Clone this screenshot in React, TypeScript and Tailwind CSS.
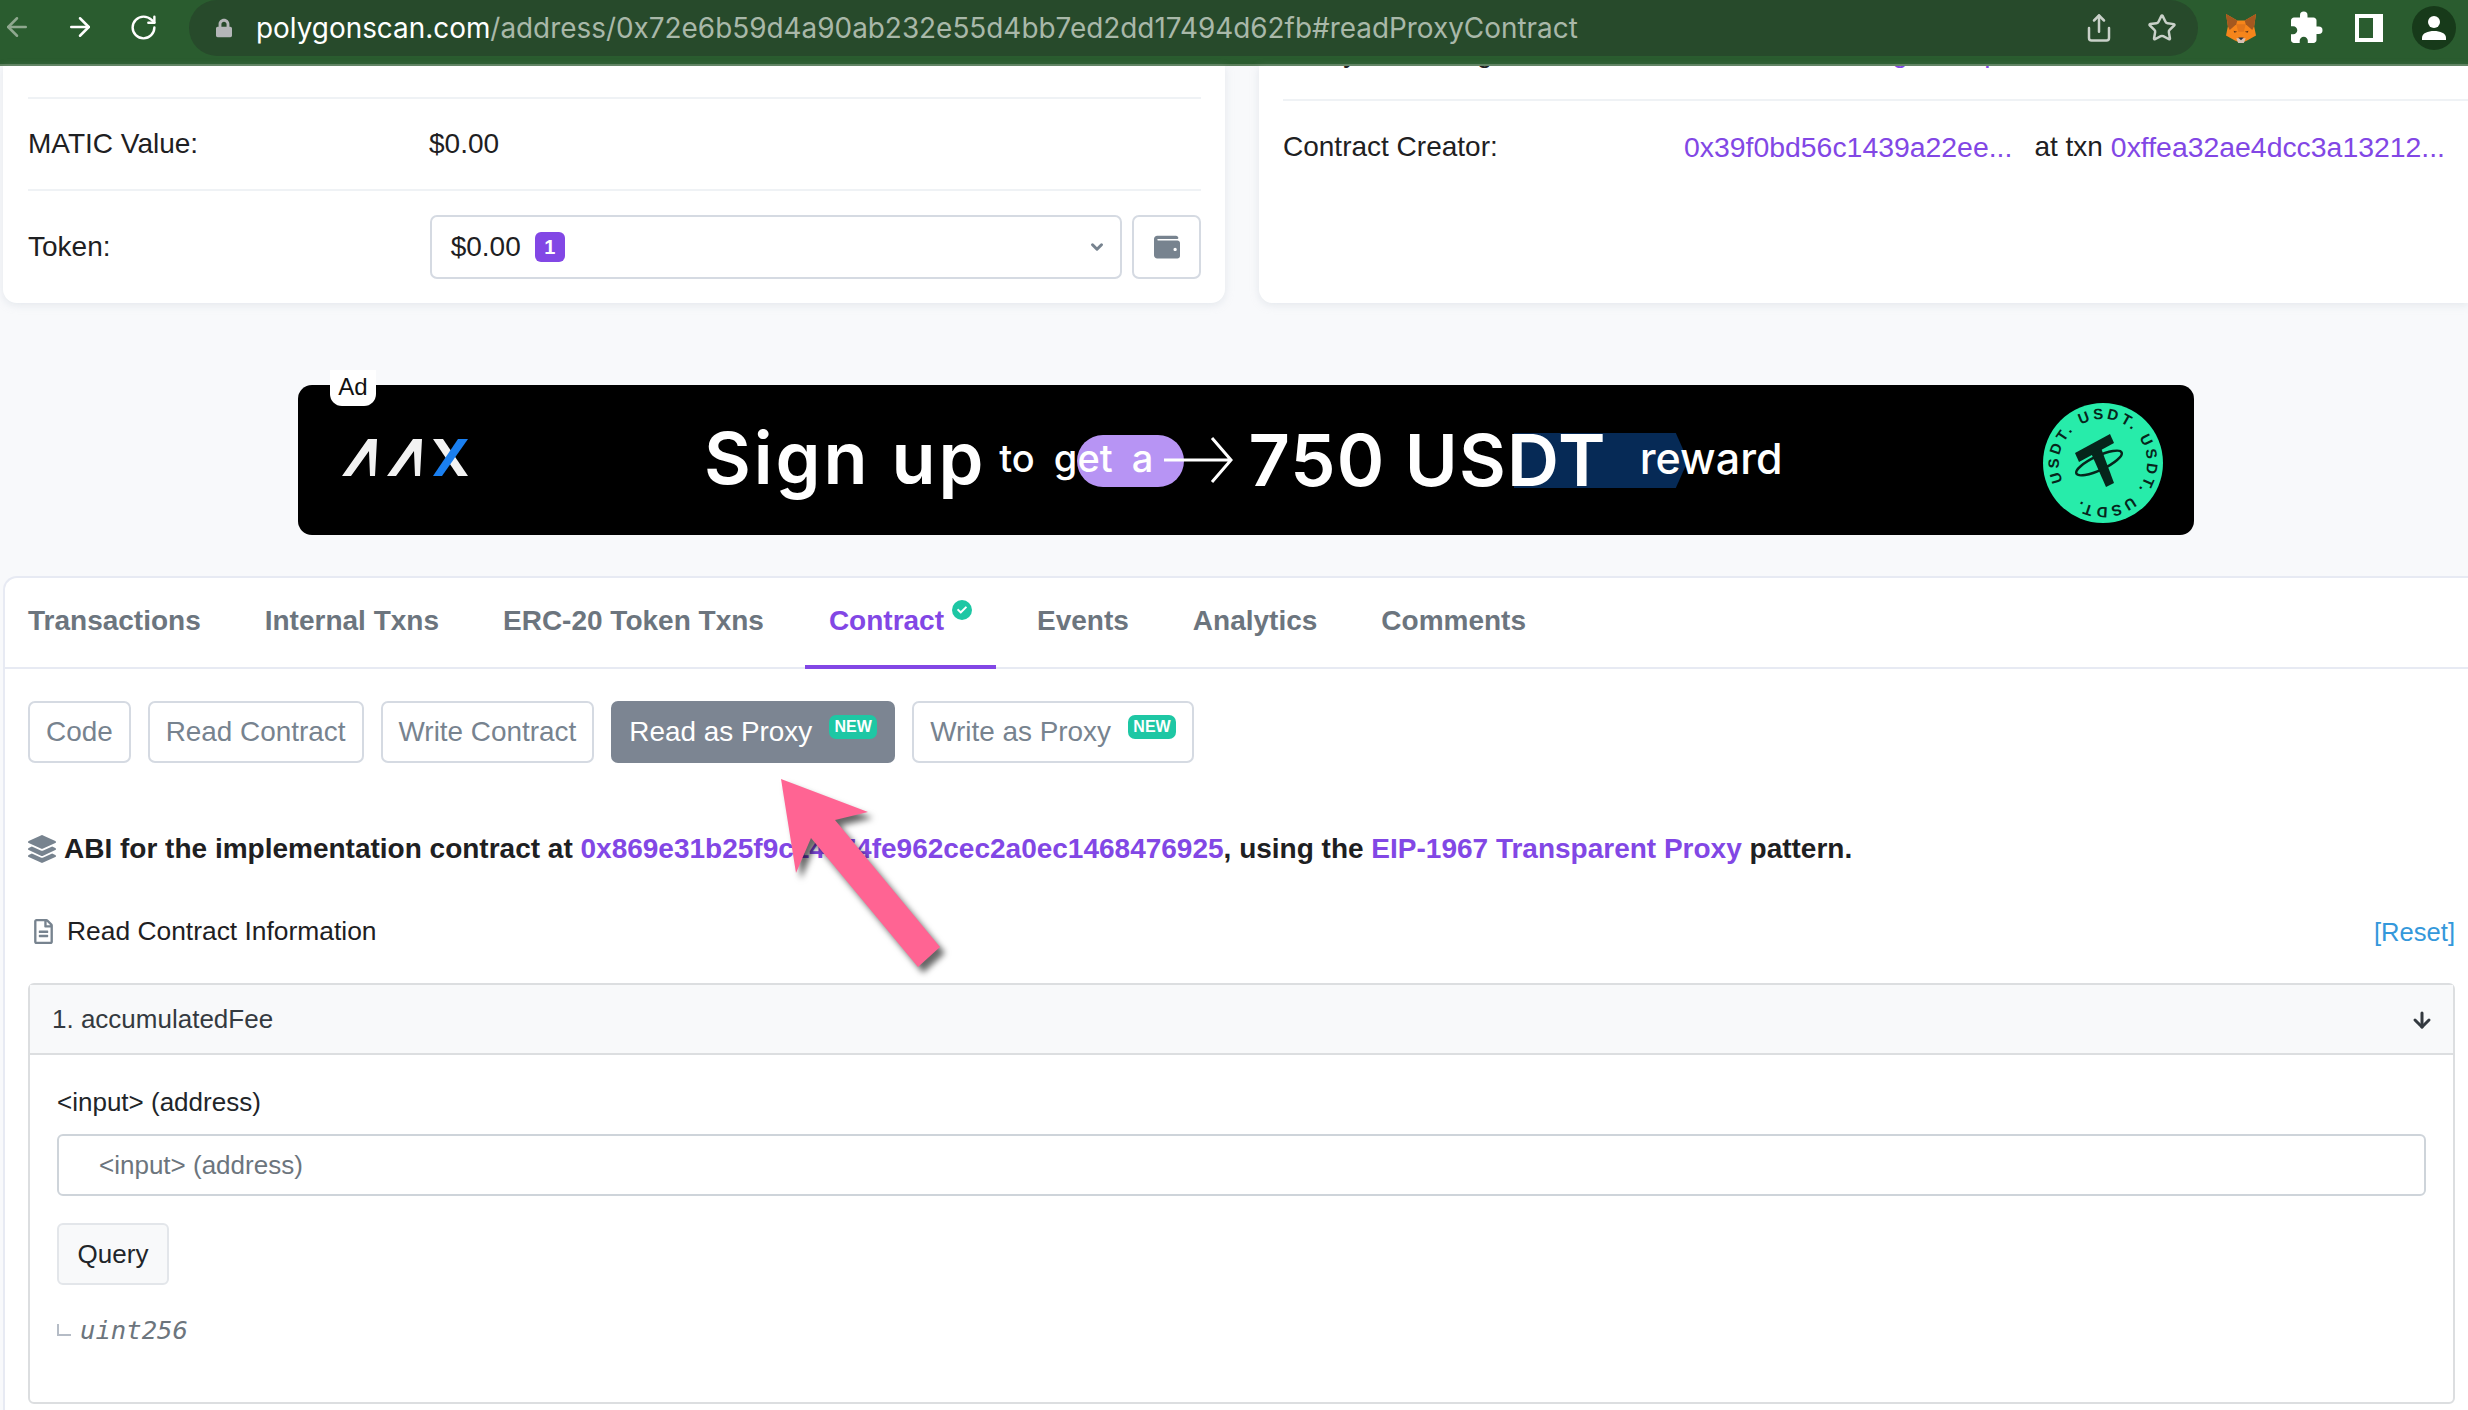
import { ArrowDown, ArrowLeft, ArrowRight, ChevronDown, RotateCw, Share, Star } from 'lucide-react';
import { FaCheck, FaLayerGroup, FaLock, FaRegFileAlt, FaWallet } from 'react-icons/fa';
import { MdExtension } from 'react-icons/md';

const tabs = ['Transactions', 'Internal Txns', 'ERC-20 Token Txns', 'Contract', 'Events', 'Analytics', 'Comments'];

function NewBadge() {
  return (
    <span className="ml-[17px] -mt-[10px] flex h-[24px] w-[48px] items-center justify-center rounded-[7px] bg-[#1ec7a4] text-[16px] font-bold text-white">
      NEW
    </span>
  );
}

function FoxIcon() {
  return (
    <svg width="32" height="30" viewBox="0 0 34 32">
      <polygon points="1,1 13,8 21,8 33,1 31,14 33,24 24,29 20,31 14,31 10,29 1,24 3,14" fill="#f6851b" />
      <polygon points="1,1 13,8 12,12 5,18 3,14" fill="#a4581f" />
      <polygon points="33,1 21,8 22,12 29,18 31,14" fill="#a4581f" />
      <polygon points="12,12 22,12 20,20 14,20" fill="#e2761b" />
      <polygon points="9,19 13,20 10,21" fill="#5b3418" />
      <polygon points="25,19 21,20 24,21" fill="#5b3418" />
      <polygon points="12,27 22,27 20,32 14,32" fill="#d7c1b3" />
      <polygon points="14,26 20,26 17,29" fill="#233447" />
    </svg>
  );
}

function AvatarIcon() {
  return (
    <svg width="44" height="44" viewBox="0 0 44 44">
      <circle cx="22" cy="22" r="22" fill="#173a1a" />
      <circle cx="22" cy="16" r="6" fill="#fff" />
      <path d="M10 34 v-2 c0-5 6-7 12-7 s12 2 12 7 v2 z" fill="#fff" />
    </svg>
  );
}

function BrowserBar() {
  return (
    <div className="flex h-[66px] items-start border-b-2 border-[#5b7f5c] bg-[#2a5c2f] font-['Inter',sans-serif]">
      <ArrowLeft className="ml-[2px] mt-[12px] h-[30px] w-[30px] text-[#8fa88f]" strokeWidth={2} />
      <ArrowRight className="ml-[33px] mt-[12px] h-[30px] w-[30px] text-white" strokeWidth={2} />
      <RotateCw className="ml-[34px] mt-[13px] h-[29px] w-[29px] text-white" strokeWidth={2} />
      <div className="ml-[31px] flex h-[56px] w-[2009px] items-center rounded-[30px] bg-[#274a2b]">
        <FaLock className="ml-[27px] h-[20px] w-[16px] text-[#b4b6b8]" />
        <div className="ml-[24px] flex-1 pt-[2px] text-[27.9px] leading-none whitespace-nowrap text-[#a9b8a9]">
          <span className="text-white">polygonscan.com</span>/address/0x72e6b59d4a90ab232e55d4bb7ed2dd17494d62fb#readProxyContract
        </div>
        <Share className="h-[30px] w-[30px] text-[#c9d1c9]" strokeWidth={2} />
        <Star className="ml-[33px] mr-[21px] h-[30px] w-[30px] text-[#c9d1c9]" strokeWidth={2} />
      </div>
      <div className="ml-[27px] mt-[13px]">
        <FoxIcon />
      </div>
      <MdExtension className="ml-[31px] mt-[10px] h-[36px] w-[36px] text-white" />
      <div className="ml-[31px] mt-[14px] h-[28px] w-[28px] border-y-[4px] border-r-[10px] border-l-[4px] border-white" />
      <div className="ml-[29px] mt-[6px]">
        <AvatarIcon />
      </div>
    </div>
  );
}

function SummaryCards() {
  return (
    <div className="flex items-start pl-[3px]">
      {/* Left card */}
      <div className="h-[237px] w-[1222px] rounded-b-[14px] bg-white pl-[25px] pr-[24px] pt-[31px] shadow-[0_2px_8px_rgba(189,197,209,0.35)]">
        <div className="border-t-2 border-[#eff2f5]">
          <div className="flex h-[90px] items-center">
            <span className="w-[401px]">MATIC Value:</span>
            <span>$0.00</span>
          </div>
        </div>
        <div className="flex h-[113px] items-center border-t-2 border-[#eff2f5] pt-[1px]">
          <span className="w-[402px]">Token:</span>
          <div className="flex h-[64px] w-[693px] items-center rounded-[7px] border-2 border-[#d5dae2] pl-[19px] pr-[14px]">
            $0.00
            <span className="ml-[14px] flex h-[30px] w-[30px] items-center justify-center rounded-[6px] bg-[#8247e5] text-[20px] font-bold text-white">
              1
            </span>
            <ChevronDown className="ml-auto h-[18px] w-[18px] text-[#77838f]" strokeWidth={4} />
          </div>
          <div className="ml-[10px] flex h-[64px] w-[69px] items-center justify-center rounded-[7px] border-2 border-[#d5dae2]">
            <FaWallet className="h-[26px] w-[28px] text-[#77838f]" />
          </div>
        </div>
      </div>

      {/* Right card */}
      <div className="ml-[34px] h-[237px] flex-1 overflow-hidden rounded-bl-[14px] bg-white pl-[24px] shadow-[0_2px_8px_rgba(189,197,209,0.35)]">
        <div className="-mt-[47px] mb-[12px] flex h-[68px] items-center">
          <span className="flex w-[401px] items-center">
            <span className="mr-[17px] h-[20px] w-[20px] rounded-full bg-[#77838f]" />
            My Name Tag:
          </span>
          <span>
            Not Available, <span className="ml-[8px] text-[#8247e5]">login to update</span>
          </span>
        </div>
        <div className="flex h-[94px] items-center border-t-2 border-[#eff2f5]">
          <span className="w-[401px]">Contract Creator:</span>
          <span className="text-[28.4px] text-[#8247e5]">0x39f0bd56c1439a22ee...</span>
          <span className="ml-[22px]">at txn</span>
          <span className="ml-[8px] text-[28.4px] text-[#8247e5]">0xffea32ae4dcc3a13212...</span>
        </div>
      </div>
    </div>
  );
}

function AaxLogo() {
  return (
    <svg width="128" height="38" viewBox="0 0 128 38">
      <polygon points="0,37 26,0 35,0 33,37 28,37 27,12 9,37" fill="#f2f2f2" />
      <polygon points="45,37 71,0 80,0 78,37 73,37 72,12 54,37" fill="#f2f2f2" />
      <polygon points="91,0 101,0 126,37 116,37" fill="#f2f2f2" />
      <polygon points="116,0 126,0 100,37 91,37" fill="#1a7ff0" />
    </svg>
  );
}

function TetherBadge() {
  return (
    <svg width="120" height="120" viewBox="0 0 120 120">
      <circle cx="60" cy="60" r="60" fill="#27ecaa" />
      <defs>
        <path id="ring" d="M16 60 a44 44 0 1 1 88 0 a44 44 0 1 1 -88 0" />
      </defs>
      <g transform="rotate(-25 60 60)">
        <text fontFamily="'Liberation Sans', sans-serif" fontSize="15" fontWeight="700" fill="#06251b" letterSpacing="2.9">
          <textPath href="#ring">USDT. USDT. USDT. USDT.</textPath>
        </text>
      </g>
      <polygon points="32,50 67,31 71,40 36,59" fill="#06251b" />
      <polygon points="48,50 58,45 71,80 63,84" fill="#06251b" />
      <ellipse cx="56" cy="60" rx="25" ry="7" fill="none" stroke="#06251b" strokeWidth="2.5" transform="rotate(-25 56 60)" />
    </svg>
  );
}

function AdBanner() {
  return (
    <div className="relative ml-[298px] mt-[82px] flex h-[150px] w-[1896px] items-center rounded-[14px] bg-black font-['Inter',sans-serif] text-white">
      <span className="absolute left-[32px] -top-[15px] flex h-[36px] w-[46px] items-center justify-center rounded-b-[12px] bg-white pb-[2px] font-['Liberation_Sans',sans-serif] text-[24px] text-[#111]">
        Ad
      </span>
      {/* purple pill and navy tag sit behind the headline */}
      <span className="absolute left-[779px] top-[50px] h-[52px] w-[107px] rounded-full bg-[#b794f4]" />
      <span className="absolute left-[1216px] top-[48px] h-[55px] w-[174px] bg-[#062a56] [clip-path:polygon(0_0,93%_0,100%_50%,93%_100%,0_100%)]" />
      <div className="ml-[44px] -mt-[4px]">
        <AaxLogo />
      </div>
      <span className="relative ml-[234px] -mt-[4px] text-[72px] leading-none font-semibold tracking-[2.9px]">Sign up</span>
      <span className="relative ml-[13px] -mt-[4px] text-[38px] leading-none font-medium [word-spacing:9px]">to get a</span>
      <svg className="relative ml-[11px]" width="70" height="50" viewBox="0 0 70 50" fill="none" stroke="white" strokeWidth="3">
        <path d="M0 25 H66 M48 3 L67 25 L48 47" />
      </svg>
      <span className="relative ml-[14px] text-[72px] leading-none font-semibold tracking-[1.2px]">750 USDT</span>
      <span className="relative ml-[33px] -mt-[4px] text-[43px] leading-none font-medium">reward</span>
      <div className="absolute left-[1745px] top-[18px]">
        <TetherBadge />
      </div>
    </div>
  );
}

function PointerArrow() {
  return (
    <svg className="absolute left-[770px] top-[770px] drop-shadow-[5px_6px_3px_rgba(0,0,0,0.6)]" width="190" height="210" viewBox="0 0 190 210">
      <polygon points="11,9 98,42 65,50 170,177 148,197 41,68 26,103" fill="#ff6493" />
    </svg>
  );
}

function ContractPanel() {
  return (
    <div className="ml-[3px] h-[834px] rounded-tl-[14px] border-t-2 border-l-2 border-[#e7eaf3] bg-white">
      <div className="flex h-[91px] border-b-2 border-[#e7eaf3]">
        {tabs.map((tab) => (
          <div
            key={tab}
            className={
              tab === 'Contract'
                ? 'mr-[18px] flex h-[91px] items-center border-b-4 border-[#8247e5] px-[24px] pb-[1px] font-bold text-[#8247e5]'
                : 'mr-[18px] flex h-[91px] items-center px-[23px] pb-[5px] font-bold text-[#6c757e]'
            }
          >
            {tab}
            {tab === 'Contract' && (
              <span className="mb-[22px] ml-[8px] flex h-[20px] w-[20px] items-center justify-center rounded-full bg-[#1ec7a4]">
                <FaCheck className="h-[10px] w-[10px] text-white" />
              </span>
            )}
          </div>
        ))}
      </div>

      <div className="pl-[23px] pr-[13px] pt-[32px]">
        <div className="flex gap-[17px] text-[27.9px] text-[#77838f]">
          <div className="flex h-[62px] items-center rounded-[7px] border-2 border-[#d5dae2] px-[16px]">Code</div>
          <div className="flex h-[62px] items-center rounded-[7px] border-2 border-[#d5dae2] px-[16px]">Read Contract</div>
          <div className="flex h-[62px] items-center rounded-[7px] border-2 border-[#d5dae2] px-[16px]">Write Contract</div>
          <div className="flex h-[62px] items-center rounded-[7px] bg-[#7c8592] px-[18px] text-white">
            Read as Proxy
            <NewBadge />
          </div>
          <div className="flex h-[62px] items-center rounded-[7px] border-2 border-[#d5dae2] px-[16px]">
            Write as Proxy
            <NewBadge />
          </div>
        </div>

        <div className="mt-[65px] flex items-center font-bold">
          <FaLayerGroup className="mr-[8px] h-[28px] w-[28px] text-[#77838f]" />
          <span>
            ABI for the implementation contract at{' '}
            <span className="text-[#8247e5]">0x869e31b25f9c14a74fe962cec2a0ec1468476925</span>, using the{' '}
            <span className="text-[#8247e5]">EIP-1967 Transparent Proxy</span> pattern.
          </span>
        </div>

        <div className="mt-[42px] flex items-center justify-between text-[26.4px]">
          <div className="flex items-center">
            <FaRegFileAlt className="ml-[6px] mr-[14px] h-[25px] w-[19px] text-[#77838f]" />
            Read Contract Information
          </div>
          <span className="text-[25.6px] text-[#3498db]">[Reset]</span>
        </div>

        <div className="mt-[31px] h-[421px] rounded-[6px] border-2 border-[#dcdee0] text-[26px]">
          <div className="flex h-[70px] items-center justify-between border-b-2 border-[#dcdee0] bg-[#f8f9fa] pl-[22px] pr-[19px] pt-[2px] text-[#343a40]">
            1. accumulatedFee
            <ArrowDown className="h-[24px] w-[24px] text-[#343a40]" strokeWidth={3} />
          </div>
          <div className="px-[27px]">
            <div className="mt-[29px] leading-[36px] text-[#212529]">{'<input> (address)'}</div>
            <input
              readOnly
              placeholder="<input> (address)"
              className="mt-[14px] block h-[62px] w-full rounded-[6px] border-2 border-[#ced4da] pl-[40px] pt-[2px] text-[26px] placeholder:text-[#6c757d]"
            />
            <div className="mt-[27px] flex h-[62px] w-[112px] items-center justify-center rounded-[6px] border-2 border-[#e3e6ea] bg-[#f8f9fa] pt-[2px] text-[#212529]">
              Query
            </div>
            <div className="mt-[26px] flex items-center">
              <span className="h-[12px] w-[14px] border-b-2 border-l-2 border-[#b5bcc6]" />
              <span className="ml-[9px] font-['DejaVu_Sans_Mono',monospace] text-[25.6px] italic text-[#6c757d]">uint256</span>
            </div>
          </div>
        </div>
      </div>
    </div>
  );
}

export default function App() {
  return (
    <div className="relative h-[1410px] w-[2468px] overflow-hidden bg-[#f8f9fb] font-['Liberation_Sans',sans-serif] text-[28px] text-[#1e2022]">
      <BrowserBar />
      <SummaryCards />
      <AdBanner />
      <div className="mt-[41px]">
        <ContractPanel />
      </div>
      <PointerArrow />
    </div>
  );
}
